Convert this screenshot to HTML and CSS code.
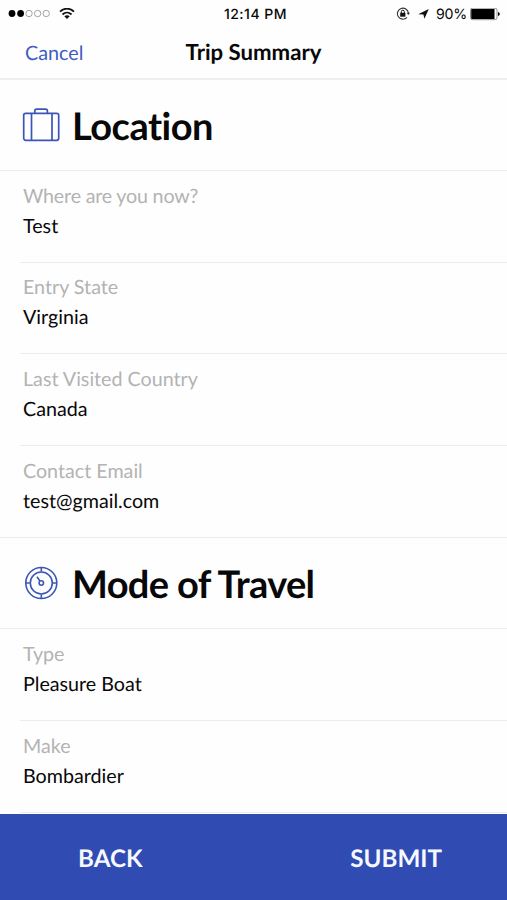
FILE: index.html
```html
<!DOCTYPE html>
<html lang="en">
<head>
<meta charset="utf-8">
<title>Trip Summary</title>
<link rel="stylesheet" href="styles.css">
</head>
<body>
<div class="screen">
  <div class="status">
    <div class="signal">
      <svg width="42" height="10" viewBox="0 0 42 10"><g fill="#000"><circle cx="4" cy="4.500" r="3.4"/><circle cx="12.6" cy="4.500" r="3.4"/></g><g fill="none" stroke="#999" stroke-width=".9"><circle cx="21" cy="4.500" r="3.2"/><circle cx="29.600" cy="4.500" r="3.2"/><circle cx="38.200" cy="4.500" r="3.2"/></g></svg>
      <svg class="wifi" width="16" height="12" viewBox="0 0 16 12"><g fill="none" stroke="#111" stroke-width="1.8"><path d="M1 3.700C5-.3 11-.3 15 3.700"/><path d="M3.5 6.500C6.200 3.900 9.800 3.900 12.500 6.500"/></g><path d="M5.300 8.200Q8 6.100 10.700 8.200L8 11Z" fill="#111"/></svg>
    </div>
    <div class="time">12:14 PM</div>
    <div class="power">
      <svg width="14" height="14" viewBox="0 0 14 14"><path d="M11 10.400A5.500 5.500 0 1 1 12.400 6" fill="none" stroke="#333" stroke-width="1.100"/><path d="M10.700 5.800h3.200l-1.600 2.200z" fill="#222"/><rect x="4.200" y="5.800" width="5.200" height="3.900" fill="#111"/><path d="M5.300 6V4.700a1.500 1.500 0 0 1 3 0V6" fill="none" stroke="#111"/></svg>
      <svg class="arrow" width="11" height="10" viewBox="0 0 11 10"><path d="M10.800 0L6.400 9.800 5.400 5.600.2 5.200z" fill="#111"/></svg>
      <span class="percent">90%</span>
      <svg class="battery" width="30" height="13" viewBox="0 0 30 13"><rect x=".5" y=".2" width="26.500" height="11.500" rx="2" fill="#fff" stroke="#777" stroke-width=".8"/><path d="M2 .9h22.500v10.200H2q-.8 0-.8-.8V1.700q0-.8.8-.8z"/><path d="M28 4q1.800.7 1.800 2T28 8z"/></svg>
    </div>
  </div>
  <header class="nav">
    <a class="cancel">Cancel</a>
    <h1 class="title">Trip Summary</h1>
  </header>
  <main class="content">
    <section>
      <div class="heading">
        <svg class="icon" width="38" height="36" viewBox="0 0 38 36"><g fill="none" stroke="#3c55b8" stroke-width="1.700"><rect x="1.700" y="6.300" width="35" height="27" rx="2"/><path d="M9.500 6.300v27M30 6.300v27M12.800 6.300V4q0-1.800 1.800-1.800h9q1.800 0 1.800 1.800v2.300"/></g></svg>
        <h2 class="name">Location</h2>
      </div>
      <div class="row"><div class="label tight">Where are you now?</div><div class="value">Test</div></div>
      <div class="row"><div class="label">Entry State</div><div class="value">Virginia</div></div>
      <div class="row"><div class="label">Last Visited Country</div><div class="value">Canada</div></div>
      <div class="row"><div class="label">Contact Email</div><div class="value">test@gmail.com</div></div>
    </section>
    <section>
      <div class="heading">
        <svg class="icon" width="38" height="36" viewBox="0 0 38 36"><g fill="none" stroke="#3c55b8" stroke-width="1.600"><circle cx="19.300" cy="18" r="15.500"/><circle cx="19.300" cy="18" r="11"/><circle cx="19.300" cy="18" r="2.200"/><path d="M18.100 16.200L15 11.800M19.300 2.500v4M19.300 29.500v4M3.800 18h4M30.800 18h4"/></g></svg>
        <h2 class="name travel">Mode of Travel</h2>
      </div>
      <div class="row"><div class="label">Type</div><div class="value">Pleasure Boat</div></div>
      <div class="row"><div class="label">Make</div><div class="value">Bombardier</div></div>
    </section>
  </main>
  <footer class="actions"><div class="back">BACK</div><div class="submit">SUBMIT</div></footer>
</div>
</body>
</html>
```
FILE: styles.css
```css
* { box-sizing: border-box; }
body { margin: 0; background: #fff; color: #080808; font-family: Lato, sans-serif; text-rendering: geometricPrecision; font-variant-ligatures: none; }
h1, h2 { margin: 0; }
svg { display: block; flex: none; }
.screen { width: 507px; height: 900px; overflow: hidden; display: flex; flex-direction: column; background: #fefefe; }
.status { height: 27px; flex: none; display: grid; grid-template-columns: 1fr auto 1fr; align-items: center; padding: 0 7px 0 8px; font: 500 14px/27px Inter, sans-serif; }
.signal { display: flex; align-items: center; gap: 9px; }
.time { letter-spacing: .5px; font-weight: 500; padding: 1px 0 0 3px; line-height: 26px; }
.power { display: flex; align-items: center; justify-content: flex-end; }
.arrow { margin-left: 8px; }
.percent { margin-left: 7px; padding-top: 1px; font-weight: 400; font-size: 14.200px; letter-spacing: -.2px; }
.battery { margin-left: 3px; }
.nav { height: 53px; flex: none; display: grid; grid-template-columns: 1fr auto 1fr; align-items: center; border-bottom: 2px solid #efefef; padding: 0 25px 2px; line-height: 48px; }
.cancel { color: #3f5cc0; font-size: 19.800px; padding-top: 2px; }
.title { font-size: 22.200px; font-weight: 700; }
.content { flex: none; height: 734px; overflow: hidden; }
.heading { height: 91.600px; display: flex; align-items: center; gap: 12px; padding-left: 22px; border-bottom: 1px solid #ebebeb; }
section:first-child .heading { height: 91px; }
.name { font-size: 38px; font-weight: 700; line-height: 46px; letter-spacing: -.5px; padding-top: 2px; }
.travel { letter-spacing: -.65px; }
.row { height: 91.700px; margin-left: 20px; padding: 12.600px 0 0 3px; border-bottom: 1px solid #ebebeb; }
.row:last-child { margin-left: 0; padding-left: 23px; }
section:last-child .row:last-child { margin-left: 20px; padding-left: 3px; }
.label { color: #b3b3b3; font-size: 19.700px; line-height: 26px; }
.tight { letter-spacing: -.2px; }
.value { font-size: 19.700px; line-height: 26px; margin-top: 4.200px; }
.actions { flex: none; height: 86px; display: flex; justify-content: space-between; align-items: center; padding: 2px 65px 0 78px; background: #304cb2; color: #f6f8ff; font-size: 24.200px; font-weight: 700; }
```
